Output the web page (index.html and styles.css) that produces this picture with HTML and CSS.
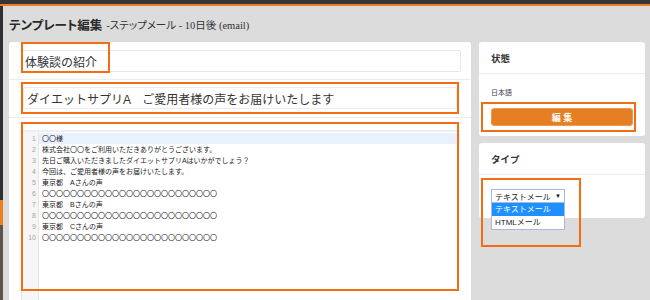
FILE: index.html
```html
<!DOCTYPE html>
<html lang="ja">
<head>
    <meta charset="UTF-8">
    <meta name="viewport" content="width=device-width, initial-scale=1.0">
    <title>テンプレート編集</title>
    <link rel="stylesheet" href="styles.css">
</head>
<body>

<div class="topbar"></div>

<div class="page">
    <nav class="side-strip">
        <span class="strip-top"></span>
        <span class="strip-active"></span>
        <span class="strip-rest"></span>
    </nav>

    <main class="content">
        <h1 class="page-title">テンプレート編集 <small>-ステップメール - 10日後 (email)</small></h1>

        <div class="columns">
            <section class="card main-card">
                <div class="field-row name-row">
                    <input type="text" class="text-field" value="体験談の紹介">
                    <span class="mark mark-name"></span>
                </div>

                <div class="field-row subject-row">
                    <div class="mark-wrap">
                        <input type="text" class="text-field subject-field" value="ダイエットサプリA　ご愛用者様の声をお届けいたします">
                    </div>
                </div>

                <div class="editor-row">
                    <div class="editor">
                        <div class="editor-toolbar"></div>
                        <div class="editor-body">
                            <div class="gutter">
                                <span>1</span><span>2</span><span>3</span><span>4</span><span>5</span>
                                <span>6</span><span>7</span><span>8</span><span>9</span><span>10</span>
                            </div>
                            <div class="lines">
                                <div class="line active">〇〇様</div>
                                <div class="line">株式会社〇〇をご利用いただきありがとうございます。</div>
                                <div class="line">先日ご購入いただきましたダイエットサプリAはいかがでしょう？</div>
                                <div class="line">今回は、ご愛用者様の声をお届けいたします。</div>
                                <div class="line">東京都　Aさんの声</div>
                                <div class="line">〇〇〇〇〇〇〇〇〇〇〇〇〇〇〇〇〇〇〇〇〇〇〇〇〇</div>
                                <div class="line">東京都　Bさんの声</div>
                                <div class="line">〇〇〇〇〇〇〇〇〇〇〇〇〇〇〇〇〇〇〇〇〇〇〇〇〇</div>
                                <div class="line">東京都　Cさんの声</div>
                                <div class="line">〇〇〇〇〇〇〇〇〇〇〇〇〇〇〇〇〇〇〇〇〇〇〇〇〇</div>
                            </div>
                        </div>
                    </div>
                    <span class="mark mark-editor"></span>
                </div>
            </section>

            <aside class="side-col">
                <section class="card">
                    <h2 class="card-header">状態</h2>
                    <div class="card-body status-body">
                        <p class="lang-label">日本語</p>
                        <div class="mark-wrap button-wrap">
                            <button type="button" class="edit-button">編 集</button>
                        </div>
                    </div>
                </section>

                <section class="card">
                    <h2 class="card-header">タイプ</h2>
                    <div class="card-body type-body">
                        <div class="fake-select">
                            <span>テキストメール</span>
                            <span class="select-arrow">▼</span>
                        </div>
                        <ul class="select-menu">
                            <li class="selected">テキストメール</li>
                            <li>HTMLメール</li>
                        </ul>
                        <span class="mark mark-type"></span>
                    </div>
                </section>
            </aside>
        </div>
    </main>
</div>

</body>
</html>
```

FILE: styles.css
```css
* {
    margin: 0;
    padding: 0;
    box-sizing: border-box;
}
body {
    font-family: 'Liberation Sans', 'Noto Sans CJK JP', sans-serif;
    background-color: #dcdcdc;
    color: #333;
    height: 300px;
    overflow: hidden;
}
.topbar {
    height: 6px;
    background-color: #35353a;
    border-bottom: 2px solid #f07c1c;
}
.page {
    display: flex;
    height: 294px;
}

/* left navigation strip */
.side-strip {
    width: 3px;
    display: flex;
    flex-direction: column;
}
.strip-top {
    height: 194px;
    background-color: #2f2f34;
}
.strip-active {
    height: 25px;
    background-color: #e8821e;
}
.strip-rest {
    flex: 1;
    background-color: #5c554f;
}

.content {
    flex: 1;
    padding: 0 5px 0 6px;
}
.page-title {
    height: 36px;
    display: flex;
    align-items: center;
    gap: 4px;
    padding-left: 0;
    font-family: 'Liberation Serif', 'Noto Sans CJK JP', serif;
    font-size: 12.5px;
    font-weight: bold;
    color: #2a2a2a;
    font-feature-settings: "palt";
}
.page-title small {
    font-size: 10.5px;
    font-weight: normal;
    color: #333;
}
.columns {
    display: grid;
    grid-template-columns: 462px 166px;
    gap: 8px;
    align-items: start;
}
.card {
    background-color: #fff;
    border-radius: 3px;
    position: relative;
}
.main-card {
    height: 270px;
}

/* orange highlight marks */
.mark {
    position: absolute;
    border: 2px solid #f36d12;
    pointer-events: none;
}
.mark-wrap {
    border: 2px solid #f36d12;
}

.field-row {
    position: relative;
    padding: 0 10px 0 12px;
    border-bottom: 1px solid #ececec;
}
.name-row {
    padding-top: 8px;
    padding-bottom: 7px;
}
.mark-name {
    left: 12px;
    top: 0;
    width: 89px;
    height: 31px;
}
.subject-row {
    padding-top: 2px;
    padding-bottom: 3px;
}
.subject-row .mark-wrap {
    width: calc(100% - 2px);
    padding: 3px 0;
}
.text-field {
    display: block;
    width: 100%;
    height: 22px;
    padding: 0 3px;
    border: 1px solid #e6e6e6;
    border-radius: 2px;
    font-family: 'Liberation Sans', 'Noto Sans CJK JP', sans-serif;
    font-size: 12px;
    color: #333;
    background-color: #fff;
}
.subject-field {
    border-color: #ececec;
}

/* template body editor */
.editor-row {
    position: relative;
    padding: 4px 11px 0 12px;
}
.mark-editor {
    left: 12px;
    top: 4px;
    width: 438px;
    height: 169px;
}
.editor {
    height: 180px;
    border-left: 1px solid #e4e4e4;
}
.editor-toolbar {
    height: 10px;
    border-bottom: 2px solid #efefef;
}
.editor-body {
    display: flex;
    height: 168px;
    font-size: 7px;
    line-height: 11px;
}
.gutter {
    width: 17px;
    padding: 1px 2px 0 0;
    background-color: #f6f6f6;
    border-right: 1px solid #e6e6e6;
    display: flex;
    flex-direction: column;
    align-items: flex-end;
    color: #a5a5a5;
}
.lines {
    flex: 1;
    padding-top: 1px;
    color: #222;
}
.line {
    padding-left: 3px;
    height: 11px;
    white-space: nowrap;
}
.line.active {
    background-color: #e8f1fd;
}

/* right column */
.side-col {
    display: flex;
    flex-direction: column;
    gap: 7px;
}
.card-header {
    height: 32px;
    padding: 0 12px;
    display: flex;
    align-items: center;
    font-size: 9.5px;
    font-weight: bold;
    color: #333;
    border-bottom: 1px solid #ececec;
}
.status-body {
    padding: 14px 9px 4px 2px;
}
.lang-label {
    height: 10px;
    line-height: 10px;
    padding-left: 10px;
    font-size: 7px;
    color: #444;
}
.button-wrap {
    margin-top: 4px;
    padding: 4px 1px 4px 8px;
}
.edit-button {
    display: block;
    width: 100%;
    height: 18px;
    background-color: #e67e22;
    border: 1px solid #ef9a4a;
    border-radius: 3px;
    color: #fff;
    font-family: 'Liberation Sans', 'Noto Sans CJK JP', sans-serif;
    font-size: 9px;
    font-weight: bold;
    cursor: pointer;
}

.type-body {
    position: relative;
    height: 43px;
    padding: 14px 12px 0;
}
.fake-select {
    width: 74px;
    height: 14px;
    border: 1px solid #a8bad8;
    display: flex;
    align-items: center;
    justify-content: space-between;
    padding: 0 3px 0 3px;
    font-size: 8px;
    color: #222;
    background-color: #fff;
}
.select-arrow {
    font-size: 6px;
    color: #111;
}
.select-menu {
    position: absolute;
    left: 12px;
    top: 28px;
    width: 74px;
    list-style: none;
    border: 1px solid #a8bad8;
    border-top: none;
    background-color: #fff;
    font-size: 8px;
    z-index: 2;
}
.select-menu li {
    height: 13px;
    line-height: 13px;
    padding-left: 3px;
    color: #222;
}
.select-menu li.selected {
    background-color: #1e90ff;
    color: #fff;
}
.mark-type {
    left: 2px;
    top: 3px;
    width: 100px;
    height: 69px;
    z-index: 3;
}
```
